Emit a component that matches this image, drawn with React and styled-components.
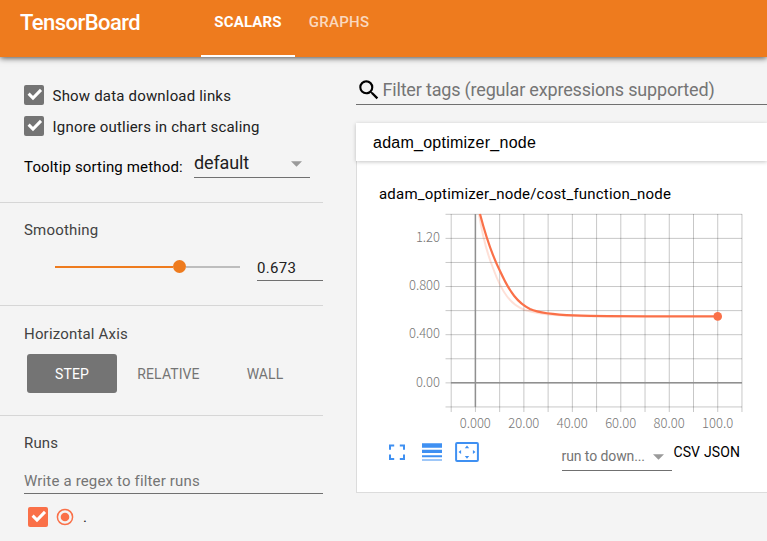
import React from 'react';
import styled, { createGlobalStyle } from 'styled-components';

const GlobalStyle = createGlobalStyle`
  * { box-sizing: border-box; }
  body {
    margin: 0;
    background: #f4f4f4;
    font-family: Roboto, sans-serif;
    overflow: hidden;
  }
  button, input { font-family: inherit; border: 0; background: none; padding: 0; margin: 0; border-radius: 0; outline: 0; }
`;

const Page = styled.div`
  display: flex;
  flex-direction: column;
  width: 767px;
  height: 541px;
  overflow: hidden;
  color: #212121;
`;
const Header = styled.header`
  display: flex;
  flex: none;
  height: 57px;
  background: #ee7b1e;
  color: #fff;
  box-shadow: 0 1px 6px rgba(0, 0, 0, 0.7);
  z-index: 1;
`;
const Brand = styled.h1`
  width: 181px;
  margin: 0 0 0 20px;
  font-size: 22px;
  font-weight: 500;
  letter-spacing: -0.55px;
  line-height: 45px;
`;
const Tab = styled.button`
  height: 57px;
  width: ${(p) => p.$width}px;
  padding-bottom: 11px;
  border-bottom: 2px solid ${(p) => (p.$active ? '#fff' : 'transparent')};
  color: ${(p) => (p.$active ? '#fff' : 'rgba(255,255,255,.72)')};
  font-size: 15px;
  font-weight: ${(p) => (p.$active ? 700 : 500)};
  letter-spacing: ${(p) => p.$tracking}px;
`;
const Body = styled.div`
  display: flex;
  flex: 1;
`;
const Sidebar = styled.aside`
  width: 323px;
  flex: none;
`;
const Section = styled.section`
  height: ${(p) => p.$height}px;
  padding: ${(p) => p.$top}px 0 0 24px;
  border-bottom: ${(p) => (p.$last ? 0 : 1)}px solid #d6d6d6;
`;
const CheckRow = styled.label`
  display: flex;
  align-items: center;
  height: 20px;
  margin-bottom: 11px;
  gap: 8.6px;
  font-size: 15px;
  letter-spacing: 0.18px;
  line-height: 20px;
`;
const CheckText = styled.span`
  padding-top: 2px;
`;
const Box = styled.span`
  display: flex;
  width: 20px;
  height: 20px;
  border-radius: 2px;
  background: ${(p) => p.$color};
`;
const SelectRow = styled.div`
  display: flex;
  align-items: flex-start;
  margin-top: 5px;
  color: #000;
  font-size: 15px;
  letter-spacing: 0.15px;
`;
const SelectLabel = styled.span`
  width: 170px;
  line-height: 40px;
`;
const Dropdown = styled.div`
  display: flex;
  align-items: center;
  justify-content: space-between;
  width: ${(p) => p.$width}px;
  height: ${(p) => p.$height}px;
  padding: ${(p) => p.$top}px ${(p) => p.$right}px 0 0;
  border-bottom: 1px solid #707070;
  color: ${(p) => p.$color};
  font-size: ${(p) => p.$size}px;
  letter-spacing: ${(p) => p.$tracking}px;
`;
const SectionTitle = styled.h2`
  margin: 0;
  color: #424242;
  font-size: 15px;
  font-weight: 400;
  letter-spacing: 0.18px;
  line-height: 20px;
`;
const SliderRow = styled.div`
  display: flex;
  align-items: center;
  margin: 13px 0 0 31px;
  gap: 17px;
`;
const Track = styled.div`
  display: flex;
  align-items: center;
  width: 185px;
  height: 14px;
  margin-bottom: 1px;
`;
const Filled = styled.span`
  height: 2px;
  background: #ee7b1e;
`;
const Knob = styled.span`
  width: 13px;
  height: 13px;
  border-radius: 50%;
  background: #ee7b1e;
`;
const Rest = styled.span`
  flex: 1;
  height: 2px;
  background: #bdbdbd;
`;
const ValueInput = styled.input`
  width: 66px;
  height: 28px;
  padding-top: 2px;
  border-bottom: 1px solid #707070;
  color: #212121;
  font-size: 15px;
  letter-spacing: 0.3px;
`;
const Modes = styled.div`
  display: flex;
  margin: 10px 0 0 3px;
`;
const Mode = styled.button`
  width: ${(p) => p.$width}px;
  height: 39px;
  border-radius: 3px;
  background: ${(p) => (p.$active ? '#747474' : 'transparent')};
  color: ${(p) => (p.$active ? '#fff' : '#747474')};
  font-size: 14px;
  letter-spacing: 0.1px;
`;
const RunInput = styled.input`
  display: block;
  width: 299px;
  height: 26px;
  margin-top: 15px;
  padding-top: 1px;
  border-bottom: 1px solid #707070;
  font-size: 15px;
  letter-spacing: 0.16px;
  &::placeholder { color: #757575; opacity: 1; }
`;
const RunRow = styled.div`
  display: flex;
  align-items: center;
  margin: 13px 0 0 4px;
  gap: 8px;
  font-size: 15px;
`;
const RunName = styled.span`
  padding-left: 1px;
`;
const Main = styled.main`
  flex: 1;
  min-width: 0;
  padding-left: 33px;
`;
const Search = styled.div`
  display: flex;
  align-items: center;
  height: 29px;
  margin: 19px 0 18px;
  border-bottom: 1px solid #707070;
`;
const SearchInput = styled.input`
  flex: 1;
  min-width: 0;
  margin-left: 0.5px;
  padding-bottom: 2px;
  font-size: 18px;
  letter-spacing: -0.18px;
  &::placeholder { color: #757575; opacity: 1; }
`;
const CardHeader = styled.div`
  height: 38px;
  padding-left: 17px;
  background: #fff;
  color: #000;
  font-family: 'Liberation Sans', sans-serif;
  font-size: 16px;
  letter-spacing: 0.25px;
  line-height: 39px;
  box-shadow: 0 1px 4px rgba(0, 0, 0, 0.23);
  position: relative;
`;
const Card = styled.section`
  height: 332px;
  padding-top: 22px;
  border: 1px solid #dcdcdc;
  border-width: 0 0 1px 1px;
  background: #fff;
`;
const ChartTitle = styled.h3`
  margin: 0 0 0 22px;
  color: #000;
  font-size: 15px;
  font-weight: 400;
  letter-spacing: 0.2px;
  line-height: 22px;
`;
const ChartSvg = styled.svg`
  display: block;
  margin: 4px 0 0 13px;
`;
const AxisText = styled.text`
  fill: #777;
  font-family: 'Noto Sans CJK SC', sans-serif;
  font-size: 13px;
  font-weight: 200;
`;
const Toolbar = styled.div`
  display: flex;
  align-items: flex-start;
  margin: 4px 0 0 32px;
  color: #000;
`;
const Icons = styled.div`
  display: flex;
  width: 172.6px;
`;
const Link = styled.a`
  margin-left: ${(p) => p.$left}px;
  margin-top: 1px;
  font-size: 14px;
  letter-spacing: 0.05px;
  line-height: 20px;
`;

const CaretSvg = styled.svg`
  margin-top: 3px;
`;

const Check = ({ color }) => (
  <Box $color={color}>
    <svg width="20" height="20"><path d="M4.6 8.6 9 13 17 4.9" fill="none" stroke="#fff" strokeWidth="3" /></svg>
  </Box>
);
const Caret = () => (
  <CaretSvg width="11" height="6"><path d="M0 .3h11L5.5 5.8z" fill="#9a9a9a" /></CaretSvg>
);

const xs = Array.from({ length: 13 }, (_, i) => 451.2 + i * 24.23);
const ys = Array.from({ length: 9 }, (_, i) => 214.3 + i * 24.08);

const Chart = () => (
  <ChartSvg width="397" height="228" viewBox="370 209 397 228">
    <g stroke="#000" strokeOpacity=".22" strokeWidth="1">
      {xs.map((x) => <path key={x} d={`M${x} 214V412`} />)}
      {ys.map((y) => <path key={y} d={`M445.5 ${y}H742`} />)}
    </g>
    <path d="M475.4 214V407M451 382.7H742" stroke="#909090" strokeWidth="1.5" />
    <g fill="none" stroke="#fa7048">
      <path d="M479 214C483 239 487 253 493 268C502 293 511 305 525 310C542 315.5 565 316.5 620 316.5" strokeWidth="2" opacity=".22" />
      <path d="M480 214C486 237 492 255 500 271C510 293 518 303 530 309C548 317 585 316.3 717.7 316.4" strokeWidth="2.2" />
    </g>
    <circle cx="717.7" cy="316.4" r="4.3" fill="#fa7048" />
    <g textAnchor="end">
      {['1.20', '0.800', '0.400', '0.00'].map((t, i) => (
        <AxisText key={t} x="440" y={242 + i * 48.2}>{t}</AxisText>
      ))}
    </g>
    <g textAnchor="middle">
      {['0.000', '20.00', '40.00', '60.00', '80.00', '100.0'].map((t, i) => (
        <AxisText key={t} x={475.3 + i * 48.46} y="428">{t}</AxisText>
      ))}
    </g>
  </ChartSvg>
);

const ToolIcons = () => (
  <Icons>
    <svg width="90" height="22" viewBox="389 441 90 22" fill="#3f90f2">
      <path d="M389 449.8V444.4h5.2v2h-3.2v3.4zM399.8 444.4h5.2v5.4h-2v-3.4h-3.2zM389 454.6h2v3.4h3.2v2H389zM403 454.6h2v5.4h-5.2v-2h3.2z" />
      <path d="M422 443.3h20v4.4h-20zM422 449.8h20v3.3h-20zM422 455.3h20v2h-20zM422 459.4h20v1.2h-20z" />
      <rect x="456.1" y="443.1" width="21.8" height="17.8" rx="1" fill="none" stroke="#3f90f2" strokeWidth="2" />
      <path d="M467 445.6l2.2 2.6h-4.4zM467 458.7l2.2-2.6h-4.4zM458.5 452l2.6-2.1v4.2zM475.5 452l-2.6-2.1v4.2z" />
    </svg>
  </Icons>
);

export default function App() {
  return (
    <>
      <GlobalStyle />
      <Page>
        <Header>
          <Brand>TensorBoard</Brand>
          <Tab $active $width={94} $tracking={0.15}>SCALARS</Tab>
          <Tab $width={88} $tracking={0.3}>GRAPHS</Tab>
        </Header>
        <Body>
          <Sidebar>
            <Section $height={146} $top={28}>
              <CheckRow><Check color="#747474" /><CheckText>Show data download links</CheckText></CheckRow>
              <CheckRow><Check color="#747474" /><CheckText>Ignore outliers in chart scaling</CheckText></CheckRow>
              <SelectRow>
                <SelectLabel>Tooltip sorting method:</SelectLabel>
                <Dropdown $width={116} $height={31} $top={0} $right={8} $size={18} $color="#212121" $tracking={-0.15}>default<Caret /></Dropdown>
              </SelectRow>
            </Section>
            <Section $height={103} $top={17}>
              <SectionTitle>Smoothing</SectionTitle>
              <SliderRow>
                <Track>
                  <Filled style={{ width: `${(0.673 * 185 - 6.5).toFixed(1)}px` }} />
                  <Knob />
                  <Rest />
                </Track>
                <ValueInput defaultValue="0.673" />
              </SliderRow>
            </Section>
            <Section $height={110} $top={18}>
              <SectionTitle>Horizontal Axis</SectionTitle>
              <Modes>
                <Mode $active $width={90}>STEP</Mode>
                <Mode $width={103}>RELATIVE</Mode>
                <Mode $width={90}>WALL</Mode>
              </Modes>
            </Section>
            <Section $height={125} $top={17} $last>
              <SectionTitle>Runs</SectionTitle>
              <RunInput placeholder="Write a regex to filter runs" />
              <RunRow>
                <Check color="#fa7048" />
                <svg width="18" height="18">
                  <circle cx="9" cy="9" r="7.6" fill="none" stroke="#fa7048" strokeWidth="1.5" />
                  <circle cx="9" cy="9" r="4.3" fill="#fa7048" />
                </svg>
                <RunName>.</RunName>
              </RunRow>
            </Section>
          </Sidebar>
          <Main>
            <Search>
              <svg width="26" height="26" viewBox="0 0 24 24">
                <path d="M15.5 14h-.79l-.28-.27A6.471 6.471 0 0 0 16 9.5 6.5 6.5 0 1 0 9.5 16c1.61 0 3.09-.59 4.23-1.57l.27.28v.79l5 4.99L20.49 19l-4.99-5zm-6 0C7.01 14 5 11.99 5 9.5S7.01 5 9.5 5 14 7.01 14 9.5 11.99 14 9.5 14z" />
              </svg>
              <SearchInput placeholder="Filter tags (regular expressions supported)" />
            </Search>
            <CardHeader>adam_optimizer_node</CardHeader>
            <Card>
              <ChartTitle>adam_optimizer_node/cost_function_node</ChartTitle>
              <Chart />
              <Toolbar>
                <ToolIcons />
                <Dropdown $width={110} $height={30} $top={0.5} $right={8} $size={14} $color="#747474" $tracking={-0.1}>run to down...<Caret /></Dropdown>
                <Link $left={2}>CSV</Link>
                <Link $left={4}>JSON</Link>
              </Toolbar>
            </Card>
          </Main>
        </Body>
      </Page>
    </>
  );
}
